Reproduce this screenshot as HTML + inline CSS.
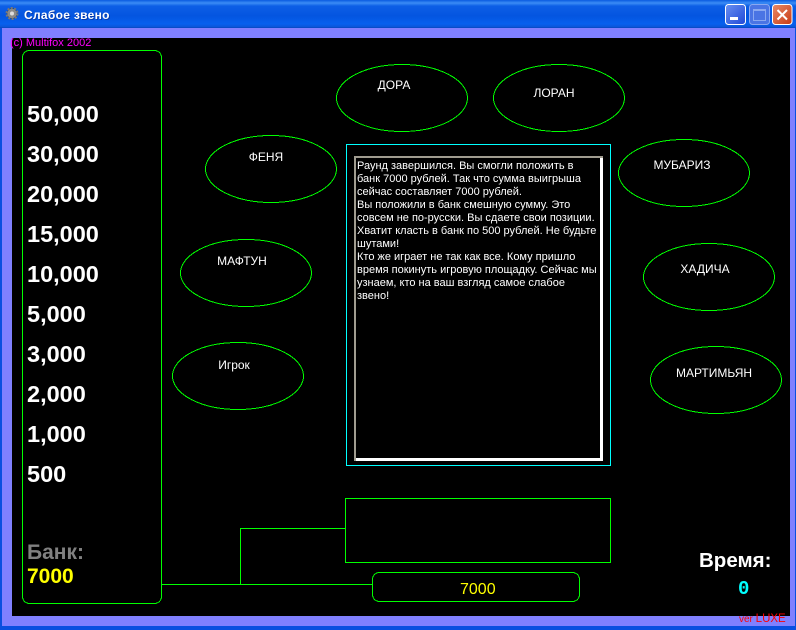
<!DOCTYPE html>
<html><head><meta charset="utf-8">
<style>
html,body{margin:0;padding:0;background:#000}
#w{position:relative;width:796px;height:630px;overflow:hidden;background:#8080ff;font-family:"Liberation Sans",sans-serif}
#tb{position:absolute;left:0;top:0;width:796px;height:28px;background:linear-gradient(180deg,#0a5be0 0,#3b8cf6 3px,#0d5fe6 6px,#0455e0 16px,#0660ee 24px,#0a55d8 27px,#0344b8 28px)}
.l{position:absolute;left:0;top:28px;width:2px;height:602px;background:#0a4fe0}
.r{position:absolute;left:795px;top:28px;width:1px;height:602px;background:#0a4fe0}
.b{position:absolute;left:0;top:626px;width:796px;height:4px;background:#0a4fe0}
#c{position:absolute;left:12px;top:38px;width:778px;height:578px;background:#000}
.t{position:absolute;white-space:nowrap}
.m{font-size:23.5px;font-weight:bold;color:#fff;left:27px;line-height:28px}
.n{font-size:12px;color:#fff;line-height:14px;transform:translateX(-50%)}
svg{position:absolute;left:0;top:0}
</style></head><body>
<div id="w">
<div id="tb"></div><div class="l"></div><div class="r"></div><div class="b"></div>
<div id="c"></div>
<svg width="796" height="630" viewBox="0 0 796 630">
<circle cx="12" cy="13.500" r="5" fill="#8a8a8a" stroke="#333" stroke-width=".5"/>
<circle cx="12" cy="13.500" r="5.500" fill="none" stroke="#777" stroke-width="2" stroke-dasharray="2 1.500"/>
<circle cx="12" cy="13.500" r="2" fill="#ddd"/>
<defs>
<linearGradient id="bl" x1="0" y1="0" x2="1" y2="1"><stop offset="0" stop-color="#6a90f0"/><stop offset="1" stop-color="#1f48d8"/></linearGradient>
<linearGradient id="rd" x1="0" y1="0" x2="1" y2="1"><stop offset="0" stop-color="#e88a68"/><stop offset="1" stop-color="#c83a14"/></linearGradient>
</defs>
<rect x="725.500" y="4.500" width="20" height="20" rx="3" fill="url(#bl)" stroke="#fff"/>
<rect x="730" y="17" width="8" height="3" fill="#fff"/>
<rect x="749.500" y="4.500" width="20" height="20" rx="3" fill="#4a74e4" stroke="#8aa8f0"/>
<rect x="753.500" y="9.500" width="12" height="11" fill="none" stroke="#8aa8f0"/>
<rect x="753" y="9" width="13" height="2" fill="#8aa8f0"/>
<rect x="772.500" y="4.500" width="19.500" height="20" rx="3" fill="url(#rd)" stroke="#fff"/>
<path d="M777.500 10l9.500 9.500M787 10l-9.500 9.500" stroke="#fff" stroke-width="2" fill="none"/>
<g fill="none" stroke="#00ff00" stroke-width="1" shape-rendering="crispEdges">
<rect x="22.500" y="50.500" width="139" height="553" rx="7"/>
<path d="M162 584.500H372M240.500 584V528.500H345"/>
<rect x="345.500" y="498.500" width="265" height="64"/>
<rect x="372.500" y="572.500" width="207" height="29" rx="7"/>
<ellipse cx="402" cy="98" rx="65.500" ry="33.500"/>
<ellipse cx="559" cy="98" rx="65.500" ry="33.500"/>
<ellipse cx="271" cy="169" rx="65.500" ry="33.500"/>
<ellipse cx="246" cy="273" rx="65.500" ry="33.500"/>
<ellipse cx="238" cy="376" rx="65.500" ry="33.500"/>
<ellipse cx="684" cy="173" rx="65.500" ry="33.500"/>
<ellipse cx="709" cy="277" rx="65.500" ry="33.500"/>
<ellipse cx="716" cy="380" rx="65.500" ry="33.500"/>
</g>
<rect x="346.500" y="144.500" width="264" height="321" fill="none" stroke="#00ffff" shape-rendering="crispEdges"/>
<path d="M355 461V157H603" fill="none" stroke="#a09c90" stroke-width="2" shape-rendering="crispEdges"/>
<path d="M356 459.500H601.500V158" fill="none" stroke="#fff" stroke-width="3" shape-rendering="crispEdges"/>
</svg>
<div class="t" style="left:24px;top:8px;font-size:12px;font-weight:bold;color:#fff;line-height:15px;text-shadow:1px 1px 0 #0a3ca8;letter-spacing:.3px">Слабое звено</div>
<div class="t" style="left:10px;top:37px;font-size:11px;color:#ff00ff;line-height:13px">(c) Multifox 2002</div>
<div class="t m" style="top:100px">50,000</div>
<div class="t m" style="top:140px">30,000</div>
<div class="t m" style="top:180px">20,000</div>
<div class="t m" style="top:220px">15,000</div>
<div class="t m" style="top:260px">10,000</div>
<div class="t m" style="top:300px">5,000</div>
<div class="t m" style="top:340px">3,000</div>
<div class="t m" style="top:380px">2,000</div>
<div class="t m" style="top:420px">1,000</div>
<div class="t m" style="top:460px">500</div>
<div class="t" style="left:27px;top:540px;font-size:21px;font-weight:bold;color:#808080;line-height:26px">Банк:</div>
<div class="t" style="left:27px;top:564px;font-size:21px;font-weight:bold;color:#ffff00;line-height:26px">7000</div>
<div class="t n" style="left:394px;top:78px">ДОРА</div>
<div class="t n" style="left:554px;top:86px">ЛОРАН</div>
<div class="t n" style="left:266px;top:150px">ФЕНЯ</div>
<div class="t n" style="left:242px;top:254px">МАФТУН</div>
<div class="t n" style="left:234px;top:358px">Игрок</div>
<div class="t n" style="left:682px;top:158px">МУБАРИЗ</div>
<div class="t n" style="left:705px;top:262px">ХАДИЧА</div>
<div class="t n" style="left:714px;top:366px">МАРТИМЬЯН</div>
<div class="t" style="left:357px;top:160px;font-size:11px;line-height:13px;color:#fff;white-space:nowrap">Раунд завершился. Вы смогли положить в<br>банк 7000 рублей. Так что сумма выигрыша<br>сейчас составляет 7000 рублей.<br>Вы положили в банк смешную сумму. Это<br>совсем не по-русски. Вы сдаете свои позиции.<br>Хватит класть в банк по 500 рублей. Не будьте<br>шутами!<br>Кто же играет не так как все. Кому пришло<br>время покинуть игровую площадку. Сейчас мы<br>узнаем, кто на ваш взгляд самое слабое<br>звено!</div>
<div class="t" style="left:460px;top:581px;font-size:16px;color:#ffff00;line-height:18px">7000</div>
<div class="t" style="left:699px;top:549px;font-size:20.500px;font-weight:bold;color:#fff;line-height:23px">Время:</div>
<div class="t" style="left:738px;top:578px;font-family:'Liberation Mono',monospace;font-size:19px;font-weight:bold;color:#00ffff;line-height:22px">0</div>
<div class="t" style="left:739px;top:613px;font-size:10px;color:#ff0000;line-height:13px">ver <span style="font-size:11.500px">LUXE</span></div>
</div>
</body></html>
